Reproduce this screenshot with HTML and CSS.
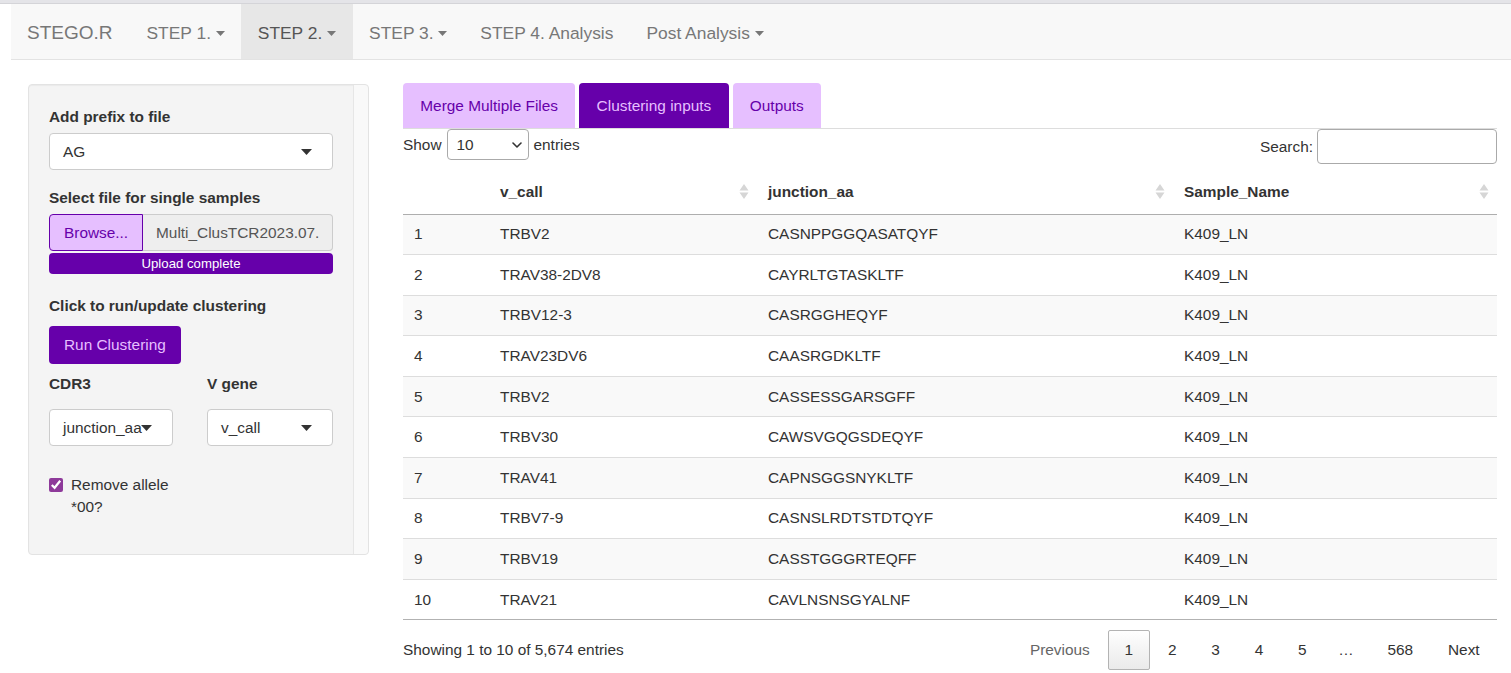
FILE: index.html
```html
<!DOCTYPE html>
<html>
<head>
<meta charset="utf-8">
<title>STEGO.R</title>
<link rel="stylesheet" href="styles.css">
</head>
<body>
<div class="topstrip"></div>
<nav class="navbar">
  <div class="brand">STEGO.R</div>
  <div class="nav-item">STEP 1. <svg class="ncaret" width="9" height="5" viewBox="0 0 9 5"><path d="M0 0H9L4.5 5Z"/></svg></div>
  <div class="nav-item active">STEP 2. <svg class="ncaret" width="9" height="5" viewBox="0 0 9 5"><path d="M0 0H9L4.5 5Z"/></svg></div>
  <div class="nav-item">STEP 3. <svg class="ncaret" width="9" height="5" viewBox="0 0 9 5"><path d="M0 0H9L4.5 5Z"/></svg></div>
  <div class="nav-item">STEP 4. Analysis</div>
  <div class="nav-item">Post Analysis <svg class="ncaret" width="9" height="5" viewBox="0 0 9 5"><path d="M0 0H9L4.5 5Z"/></svg></div>
</nav>

<div class="page">
  <aside class="well">
    <div class="well-content">
      <label class="lbl">Add prefix to file</label>
      <div class="sel full"><span class="sel-text">AG</span><svg class="scaret" width="11" height="6" viewBox="0 0 11 6"><path d="M0 0H11L5.5 6Z"/></svg></div>

      <label class="lbl lbl-file">Select file for single samples</label>
      <div class="file-input">
        <span class="browse">Browse...</span>
        <span class="filename">Multi_ClusTCR2023.07.</span>
      </div>
      <div class="progress">Upload complete</div>

      <label class="lbl lbl-run">Click to run/update clustering</label>
      <button class="btn-run">Run Clustering</button>

      <div class="two-col">
        <div class="col">
          <label class="lbl lbl-col">CDR3</label>
          <div class="sel"><span class="sel-text">junction_aa</span><svg class="scaret" width="11" height="6" viewBox="0 0 11 6"><path d="M0 0H11L5.5 6Z"/></svg></div>
          <div class="check-row">
            <input type="checkbox" class="chk" checked>
            <span class="chk-text">Remove allele *00?</span>
          </div>
        </div>
        <div class="col">
          <label class="lbl lbl-col">V gene</label>
          <div class="sel"><span class="sel-text">v_call</span><svg class="scaret" width="11" height="6" viewBox="0 0 11 6"><path d="M0 0H11L5.5 6Z"/></svg></div>
        </div>
      </div>
    </div>
    <div class="scrolltrack"></div>
  </aside>

  <main class="main">
    <div class="tabs">
      <div class="tab">Merge Multiple Files</div>
      <div class="tab active">Clustering inputs</div>
      <div class="tab">Outputs</div>
    </div>

    <div class="toolbar">
      <div class="show">
        <span>Show</span>
        <div class="lenselect"><span>10</span><svg width="10" height="6" viewBox="0 0 10 6"><path d="M1 1L5 5L9 1" fill="none" stroke="#333" stroke-width="1.6" stroke-linecap="round" stroke-linejoin="round"/></svg></div>
        <span>entries</span>
      </div>
      <div class="search">
        <span>Search:</span>
        <input type="text" class="search-input">
      </div>
    </div>

    <table class="dt">
      <colgroup>
        <col class="c-idx"><col class="c-v"><col class="c-j"><col class="c-s">
      </colgroup>
      <thead>
        <tr>
          <th></th>
          <th><div class="th-in"><span>v_call</span><svg class="sort" width="12" height="17" viewBox="0 0 12 17"><path d="M6 1L10.5 7.5H1.5Z M1.5 9.5H10.5L6 16Z"/></svg></div></th>
          <th><div class="th-in"><span>junction_aa</span><svg class="sort" width="12" height="17" viewBox="0 0 12 17"><path d="M6 1L10.5 7.5H1.5Z M1.5 9.5H10.5L6 16Z"/></svg></div></th>
          <th><div class="th-in"><span>Sample_Name</span><svg class="sort" width="12" height="17" viewBox="0 0 12 17"><path d="M6 1L10.5 7.5H1.5Z M1.5 9.5H10.5L6 16Z"/></svg></div></th>
        </tr>
      </thead>
      <tbody>
        <tr><td>1</td><td>TRBV2</td><td>CASNPPGGQASATQYF</td><td>K409_LN</td></tr>
        <tr><td>2</td><td>TRAV38-2DV8</td><td>CAYRLTGTASKLTF</td><td>K409_LN</td></tr>
        <tr><td>3</td><td>TRBV12-3</td><td>CASRGGHEQYF</td><td>K409_LN</td></tr>
        <tr><td>4</td><td>TRAV23DV6</td><td>CAASRGDKLTF</td><td>K409_LN</td></tr>
        <tr><td>5</td><td>TRBV2</td><td>CASSESSGARSGFF</td><td>K409_LN</td></tr>
        <tr><td>6</td><td>TRBV30</td><td>CAWSVGQGSDEQYF</td><td>K409_LN</td></tr>
        <tr><td>7</td><td>TRAV41</td><td>CAPNSGGSNYKLTF</td><td>K409_LN</td></tr>
        <tr><td>8</td><td>TRBV7-9</td><td>CASNSLRDTSTDTQYF</td><td>K409_LN</td></tr>
        <tr><td>9</td><td>TRBV19</td><td>CASSTGGGRTEQFF</td><td>K409_LN</td></tr>
        <tr><td>10</td><td>TRAV21</td><td>CAVLNSNSGYALNF</td><td>K409_LN</td></tr>
      </tbody>
    </table>

    <div class="footer">
      <div class="info">Showing 1 to 10 of 5,674 entries</div>
      <div class="pager">
        <span class="pbtn disabled">Previous</span>
        <span class="pbtn current">1</span>
        <span class="pbtn">2</span>
        <span class="pbtn">3</span>
        <span class="pbtn">4</span>
        <span class="pbtn">5</span>
        <span class="ellipsis">…</span>
        <span class="pbtn">568</span>
        <span class="pbtn">Next</span>
      </div>
    </div>
  </main>
</div>
</body>
</html>
```

FILE: styles.css
```css
* { box-sizing: border-box; }
html, body { margin: 0; padding: 0; background: #fff; }
body {
  font-family: "Liberation Sans", Arial, Helvetica, sans-serif;
  font-size: 15.4px;
  line-height: 22px;
  color: #333;
  width: 1511px;
  height: 673px;
  overflow: hidden;
}

.topstrip {
  height: 4px;
  background: #e4e4e8;
  border-bottom: 1px solid #d4d4d8;
}

/* navbar */
.navbar {
  margin-left: 11px;
  height: 56px;
  background: #f8f8f8;
  border-bottom: 1px solid #e3e3e3;
  display: flex;
  align-items: stretch;
}
.brand {
  padding: 2px 17.5px 0 16px;
  font-size: 19px;
  color: #777;
  display: flex;
  align-items: center;
}
.nav-item {
  padding: 2px 16.5px 0;
  display: flex;
  align-items: center;
  color: #777;
  font-size: 17.4px;
  white-space: pre;
}
.nav-item.active {
  background: #e7e7e7;
  color: #555;
}
.ncaret { fill: #777; margin-top: 1px; }

/* page layout */
.page {
  display: flex;
  align-items: flex-start;
  padding: 23px 14px 0 28px;
  gap: 34px;
}

/* sidebar */
.well {
  width: 341px;
  flex: none;
  height: 471px;
  margin-top: 1px;
  display: flex;
  background: #f4f4f4;
  border: 1px solid #e3e3e3;
  border-radius: 4px;
  box-shadow: inset 0 1px 1px rgba(0,0,0,.04);
}
.well-content {
  flex: 1;
  padding: 21px 20px 21px 20px;
  min-width: 0;
}
.scrolltrack {
  width: 15px;
  flex: none;
  background: #f9f9f9;
  border-left: 1px solid #e6e6e6;
  border-radius: 0 4px 4px 0;
}
.lbl {
  display: block;
  font-weight: bold;
  margin-bottom: 5px;
}
.lbl-file { margin-top: 17px; }
.lbl-run { margin-top: 21px; margin-bottom: 9px; }
.lbl-col { margin-top: 9px; margin-bottom: 14px; }

.sel {
  height: 37px;
  background: #fff;
  border: 1px solid #ccc;
  border-radius: 4px;
  display: flex;
  align-items: center;
  padding: 0 20px 0 13px;
}
.sel-text {
  flex: 1;
  min-width: 0;
  white-space: nowrap;
  color: #333;
}
.scaret { fill: #333; flex: none; margin-left: 3px; }

.file-input {
  display: flex;
  height: 37px;
}
.browse {
  flex: none;
  width: 94px;
  background: #e6bfff;
  border: 1px solid #6600aa;
  color: #6600aa;
  border-radius: 4px 0 0 4px;
  display: flex;
  align-items: center;
  padding-left: 14px;
}
.filename {
  flex: 1;
  min-width: 0;
  background: #eee;
  border: 1px solid #ccc;
  border-left: none;
  border-radius: 0 4px 4px 0;
  color: #555;
  padding-left: 13px;
  display: flex;
  align-items: center;
  white-space: nowrap;
  overflow: hidden;
}
.progress {
  margin-top: 2px;
  height: 21px;
  line-height: 21px;
  background: #6600aa;
  color: #fff;
  border-radius: 4px;
  text-align: center;
  font-size: 13.2px;
}
.btn-run {
  display: block;
  height: 38px;
  padding: 0 15px;
  background: #6600aa;
  color: #e6bfff;
  border: none;
  border-radius: 4px;
  font-family: inherit;
  font-size: 15.4px;
  line-height: 22px;
}

.two-col {
  display: grid;
  grid-template-columns: minmax(0, 124fr) minmax(0, 126fr);
  column-gap: 34px;
}
.check-row {
  display: flex;
  align-items: flex-start;
  margin-top: 28px;
}
.chk {
  width: 14px;
  height: 14px;
  margin: 4px 8px 0 0;
  accent-color: #8e3a9a;
  flex: none;
}
.chk-text { flex: 1; }

/* main */
.main {
  flex: 1;
  min-width: 0;
}
.tabs {
  display: flex;
  gap: 4px;
  border-bottom: 1px solid #ddd;
  height: 46px;
  align-items: flex-end;
}
.tab {
  height: 45px;
  line-height: 45px;
  padding: 0 17.3px;
  background: #e6bfff;
  color: #6600aa;
  border-radius: 4px 4px 0 0;
}
.tab.active {
  background: #6600aa;
  color: #e6bfff;
}

.toolbar {
  display: flex;
  justify-content: space-between;
  align-items: flex-start;
  height: 35px;
}
.show {
  display: flex;
  align-items: center;
  gap: 5px;
  height: 31px;
}
.lenselect {
  width: 82px;
  height: 31px;
  border: 1px solid #aaa;
  border-radius: 4px;
  background: #fff;
  display: flex;
  align-items: center;
  justify-content: space-between;
  padding: 0 6px 0 9px;
}
.search {
  display: flex;
  align-items: center;
  gap: 4px;
  height: 35px;
}
.search-input {
  width: 180px;
  height: 35px;
  border: 1px solid #aaa;
  border-radius: 4px;
  margin: 0;
  background: #fff;
}

/* table */
.dt {
  width: 100%;
  margin-top: 6px;
  border-collapse: collapse;
  table-layout: fixed;
}
.c-idx { width: 86px; }
.c-v { width: 268px; }
.c-j { width: 416px; }
.c-s { width: 324px; }
.dt th {
  text-align: left;
  font-weight: bold;
  height: 44px;
  padding: 0 7px 0 11px;
  border-bottom: 1px solid rgba(0,0,0,.3);
}
.th-in {
  display: flex;
  align-items: center;
  justify-content: space-between;
}
.sort { fill: #d6d6d6; flex: none; }
.dt td {
  padding: 8.8px 11px;
  border-top: 1px solid #ddd;
  white-space: nowrap;
}
.dt tbody tr:first-child td { border-top: none; }
.dt tbody tr:nth-child(odd) { background: #f9f9f9; }
.dt tbody tr:last-child td { border-bottom: 1px solid rgba(0,0,0,.3); }

/* footer */
.footer {
  display: flex;
  justify-content: space-between;
  align-items: center;
  margin-top: 10px;
}
.pager {
  display: flex;
  align-items: center;
  margin-right: 1px;
}
.pbtn {
  padding: 7.7px 15.4px;
  border: 1px solid transparent;
  border-radius: 2px;
  margin-left: 2px;
  color: #333;
  line-height: 22px;
}
.pbtn.disabled { color: #666; }
.pbtn.current {
  border-color: #b3b3b3;
  background: linear-gradient(#fefefe, #eaeaea);
}
.ellipsis {
  padding: 0 15.4px;
  color: #333;
}
```
